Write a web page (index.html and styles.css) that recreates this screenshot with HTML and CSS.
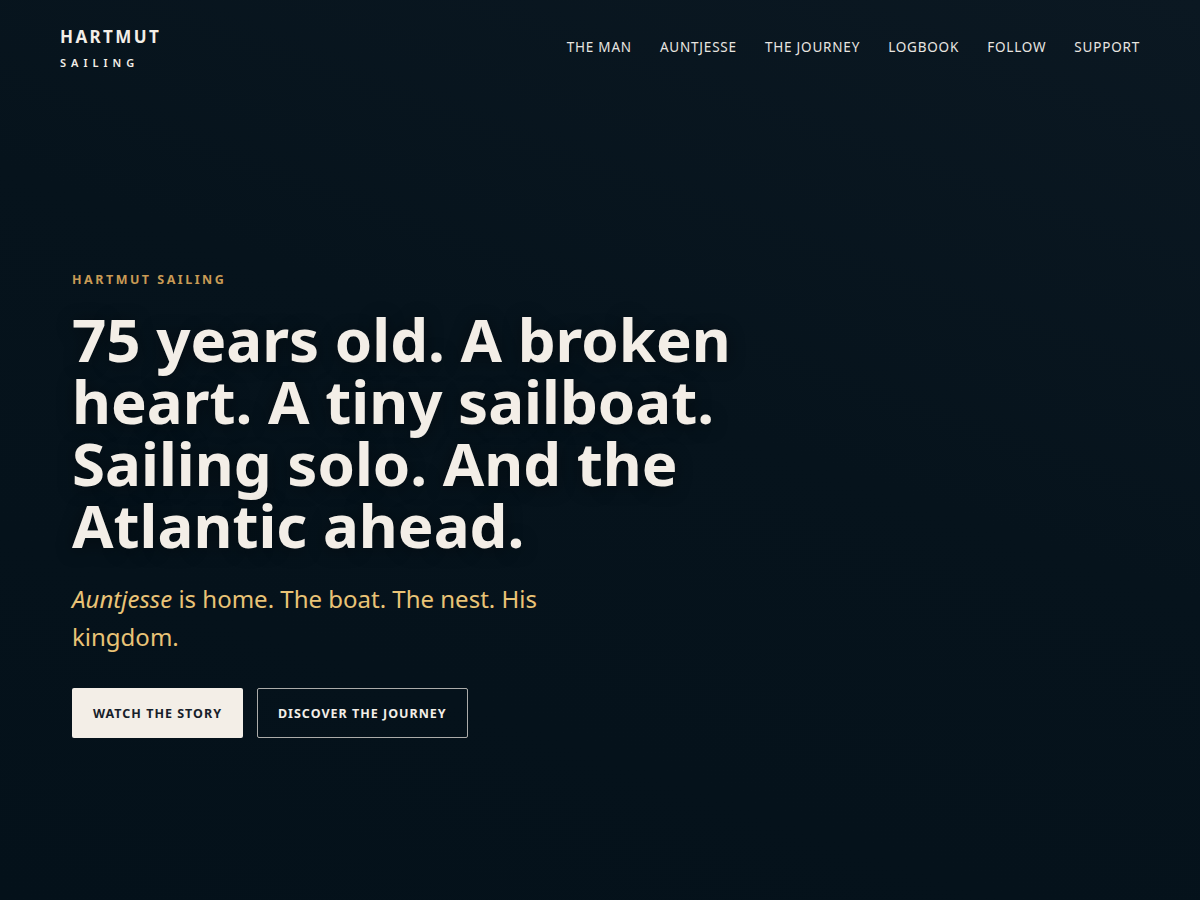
FILE: index.html
```html
<!DOCTYPE html>
<html lang="en">
<head>
    <meta charset="UTF-8">
    <meta name="viewport" content="width=device-width, initial-scale=1.0">
    <title>Hartmut Sailing</title>
    <link rel="stylesheet" href="styles.css">
</head>
<body>
    <header class="site-header">
        <a class="logo" href="#">
            <span class="logo-name">HARTMUT</span>
            <span class="logo-sub">SAILING</span>
        </a>
        <nav class="main-nav">
            <a href="#">THE MAN</a>
            <a href="#">AUNTJESSE</a>
            <a href="#">THE JOURNEY</a>
            <a href="#">LOGBOOK</a>
            <a href="#">FOLLOW</a>
            <a href="#">SUPPORT</a>
        </nav>
    </header>

    <section class="hero">
        <p class="eyebrow">HARTMUT SAILING</p>
        <h1>75 years old. A broken heart. A tiny sailboat. Sailing solo. And the Atlantic ahead.</h1>
        <p class="lead"><em>Auntjesse</em> is home. The boat. The nest. His kingdom.</p>
        <div class="actions">
            <a class="btn btn-light" href="#">WATCH THE STORY</a>
            <a class="btn btn-outline" href="#">DISCOVER THE JOURNEY</a>
        </div>
    </section>
</body>
</html>
```

FILE: styles.css
```css
:root {
    --bg: #06121b;
    --cream: #f3eee7;
    --gold: #c99b55;
    --sand: #e9c376;
}

* {
    margin: 0;
    padding: 0;
    box-sizing: border-box;
}

body {
    min-height: 900px;
    background: linear-gradient(200deg, #0b1822 0%, #06131c 45%, #04111a 100%);
    color: var(--cream);
    font-family: "Noto Sans", "Open Sans", sans-serif;
}

a {
    color: inherit;
    text-decoration: none;
}

/* header */
.site-header {
    display: flex;
    justify-content: space-between;
    align-items: flex-start;
    padding: 26px 60px 0 60px;
}

.logo {
    display: flex;
    flex-direction: column;
}

.logo-name {
    font-size: 17px;
    font-weight: 700;
    letter-spacing: 2.4px;
    line-height: 22px;
}

.logo-sub {
    font-size: 11px;
    font-weight: 600;
    letter-spacing: 5px;
    margin-top: 8px;
    line-height: 14px;
}

.main-nav {
    display: flex;
    gap: 28px;
    padding-top: 11px;
}

.main-nav a {
    font-size: 13.5px;
    letter-spacing: 0.8px;
    line-height: 20px;
    color: #e9e6e1;
}

/* hero */
.hero {
    padding: 201px 72px 0 72px;
}

.eyebrow {
    font-size: 12.5px;
    font-weight: 700;
    letter-spacing: 2.5px;
    color: var(--gold);
    line-height: 18px;
}

.hero h1 {
    max-width: 700px;
    margin-top: 19px;
    font-size: 60px;
    font-weight: 700;
    line-height: 62px;
    color: var(--cream);
    text-shadow: 0 2px 18px rgba(0, 0, 0, 0.45);
}

.lead {
    max-width: 480px;
    margin-top: 24px;
    font-size: 24px;
    line-height: 38px;
    color: var(--sand);
}

.actions {
    display: flex;
    gap: 14px;
    margin-top: 32px;
}

.btn {
    display: inline-flex;
    align-items: center;
    height: 50px;
    padding: 0 21px;
    border-radius: 2px;
    font-size: 12.5px;
    font-weight: 700;
    letter-spacing: 1px;
}

.btn-light {
    background-color: var(--cream);
    color: #16202a;
}

.btn-outline {
    padding: 0 20px;
    border: 1px solid rgba(243, 238, 231, 0.7);
    color: var(--cream);
}
```
